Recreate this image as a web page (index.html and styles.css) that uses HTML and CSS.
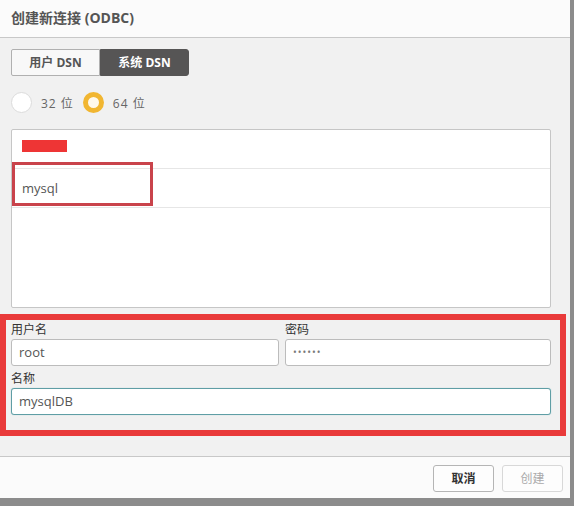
FILE: index.html
```html
<!DOCTYPE html>
<html lang="zh-CN">
<head>
<meta charset="utf-8">
<title>创建新连接 (ODBC)</title>
<link rel="stylesheet" href="styles.css">
</head>
<body>
<div class="dialog">
  <header class="dialog-header">创建新连接 (ODBC)</header>

  <main class="dialog-body">
    <div class="tabs">
      <button class="tab">用户 DSN</button>
      <button class="tab tab-active">系统 DSN</button>
    </div>

    <div class="radios">
      <label class="radio"><span class="radio-dot"></span><span class="radio-text">32 位</span></label>
      <label class="radio radio-checked"><span class="radio-dot"></span><span class="radio-text">64 位</span></label>
    </div>

    <ul class="dsn-list">
      <li class="dsn-row"><span class="redacted"></span></li>
      <li class="dsn-row">mysql<span class="row-mark"></span></li>
    </ul>

    <section class="creds">
      <div class="field">
        <label class="field-label">用户名</label>
        <input class="input" type="text" value="root">
      </div>
      <div class="field">
        <label class="field-label">密码</label>
        <input class="input input-password" type="password" value="123456">
      </div>
      <div class="field field-wide">
        <label class="field-label">名称</label>
        <input class="input input-focus" type="text" value="mysqlDB">
      </div>
    </section>
  </main>

  <footer class="dialog-footer">
    <button class="btn btn-cancel">取消</button>
    <button class="btn btn-disabled">创建</button>
  </footer>
</div>
</body>
</html>
```

FILE: styles.css
```css
* {
  box-sizing: border-box;
}

html, body {
  margin: 0;
  padding: 0;
  background: #8c8c8c;
  font-family: "Open Sans", "Noto Sans CJK SC", sans-serif;
}

.dialog {
  width: 570px;
  height: 498px;
  background: #f1f1f1;
  display: flex;
  flex-direction: column;
}

.dialog-header {
  height: 38px;
  padding: 0 11px 3px;
  display: flex;
  align-items: center;
  background: #fbfbfb;
  border-bottom: 1px solid #c8c8c8;
  font-size: 14px;
  font-weight: 700;
  color: #555;
}

.dialog-body {
  flex: 1;
  padding: 11px 0 0 0;
}

.tabs {
  display: flex;
  margin-left: 11px;
  height: 27px;
}

.tab {
  width: 89px;
  height: 27px;
  border: 1px solid #b0b0b0;
  background: #f8f8f8;
  font-family: inherit;
  font-size: 12px;
  font-weight: 700;
  color: #555;
  padding: 0;
  border-radius: 2px 0 0 2px;
}

.tab-active {
  background: #565555;
  border-color: #565555;
  color: #fff;
  border-radius: 0 3px 3px 0;
}

.radios {
  display: flex;
  align-items: center;
  gap: 9px;
  margin: 16px 0 0 11px;
  height: 22px;
}

.radio {
  display: flex;
  align-items: center;
  gap: 9px;
  font-size: 12px;
  color: #666;
  letter-spacing: 1px;
}

.radio-dot {
  width: 21px;
  height: 21px;
  border-radius: 50%;
  background: #fff;
  border: 1px solid #dcdcdc;
}

.radio-checked .radio-dot {
  border: 5px solid #f1b631;
  background: #fff9ec;
}

.dsn-list {
  list-style: none;
  margin: 15px 0 0 11px;
  padding: 0;
  width: 540px;
  height: 179px;
  background: #fff;
  border: 1px solid #c6c6c6;
  border-radius: 2px;
}

.dsn-row {
  position: relative;
  height: 39px;
  border-bottom: 1px solid #e6e6e6;
  display: flex;
  align-items: center;
  padding-left: 10px;
  font-size: 13px;
  color: #555;
}

.redacted {
  display: block;
  width: 45px;
  height: 12px;
  margin-top: -6px;
  background: #ee3535;
}

/* highlight drawn around the selected row */
.row-mark {
  position: absolute;
  left: 0;
  top: -7px;
  width: 141px;
  height: 44px;
  border: 3px solid #c9434b;
}

.creds {
  margin-top: 6px;
  width: 566px;
  border: 6px solid #e93a3a;
  padding: 1px 9px 15px 5px;
  display: grid;
  grid-template-columns: 268px 266px;
  column-gap: 6px;
  row-gap: 2px;
}

.field-wide {
  grid-column: 1 / 3;
}

.field-label {
  display: block;
  height: 18px;
  line-height: 18px;
  font-size: 12px;
  color: #333;
}

.input {
  display: block;
  width: 100%;
  height: 27px;
  margin: 0;
  border: 1px solid #bcbcbc;
  border-radius: 3px;
  background: #fff;
  padding: 0 7px;
  font-family: inherit;
  font-size: 13px;
  color: #555;
  outline: none;
}

.field-wide .field-label {
  margin-top: 2px;
}

.input-password {
  font-size: 10px;
  letter-spacing: 1px;
  color: #777;
}

.input-focus {
  border-color: #5f9ea5;
  box-shadow: 0 0 1px #8fc2c8;
}

.dialog-footer {
  height: 43px;
  margin-top: 20px;
  border-top: 1px solid #c8c8c8;
  background: #fbfbfb;
  display: flex;
  justify-content: flex-end;
  align-items: flex-start;
  gap: 8px;
  padding: 8px 7px 0 0;
}

.btn {
  width: 61px;
  height: 27px;
  border: 1px solid #b5b5b5;
  border-radius: 3px;
  background: #fdfdfd;
  font-family: inherit;
  font-size: 12px;
  padding: 0;
}

.btn-cancel {
  font-weight: 700;
  color: #333;
}

.btn-disabled {
  border-color: #d8d8d8;
  color: #aaa;
}
```
